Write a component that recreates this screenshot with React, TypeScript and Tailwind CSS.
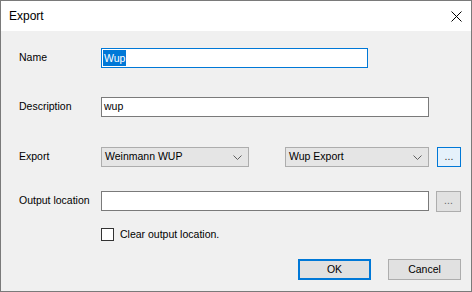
import React from 'react';

const font = { fontFamily: '"Liberation Sans", Arial, sans-serif' };

function Chevron() {
  return (
    <svg width="9" height="5" viewBox="0 0 9 5" className="shrink-0">
      <path d="M0.5 0.5 L4.5 4.5 L8.5 0.5" fill="none" stroke="#606060" strokeWidth="1" />
    </svg>
  );
}

function Combo({ text, width }: { text: string; width: string }) {
  return (
    <div className={`${width} h-[20px] flex items-center justify-between pl-[3px] pr-[6px] bg-[#e5e5e5] border border-[#adadad] text-black`}>
      <span>{text}</span>
      <Chevron />
    </div>
  );
}

function Label({ children }: { children: React.ReactNode }) {
  return <div className="w-[82px] shrink-0 text-black">{children}</div>;
}

export default function App() {
  return (
    <div className="w-[472px] h-[292px] flex flex-col border border-[#7a7a7a] bg-white text-[10.5px]" style={font}>
      {/* title bar */}
      <div className="h-[30px] shrink-0 flex items-center justify-between pl-[8px] pr-[9px] bg-white">
        <span className="text-[12px] text-black">Export</span>
        <svg width="11" height="11" viewBox="0 0 11 11">
          <path d="M0.5 0.5 L10.5 10.5 M10.5 0.5 L0.5 10.5" stroke="#000" strokeWidth="1" />
        </svg>
      </div>

      {/* client */}
      <div className="flex-1 flex flex-col bg-[#f0f0f0] pl-[18px] pr-[10px]">
        <div className="mt-[17px] h-[20px] flex items-center">
          <Label>Name</Label>
          <div className="w-[267px] h-[20px] flex items-center bg-white border border-[#0078d7] pl-[1px]">
            <span className="bg-[#0078d7] text-white px-[1px] leading-[16px]">Wup</span>
          </div>
        </div>

        <div className="mt-[29px] h-[20px] flex items-center">
          <Label>Description</Label>
          <div className="w-[328px] h-[20px] flex items-center bg-white border border-[#7a7a7a] pl-[2px] text-black">wup</div>
        </div>

        <div className="mt-[30px] h-[20px] flex items-center">
          <Label>Export</Label>
          <Combo text="Weinmann WUP" width="w-[148px]" />
          <div className="ml-[36px]">
            <Combo text="Wup Export" width="w-[144px]" />
          </div>
          <div className="ml-[8px] w-[24px] h-[20px] flex items-center justify-center bg-[#e5f1fb] border border-[#0078d7] text-[#333] leading-none pb-[2px]">...</div>
        </div>

        <div className="mt-[24px] h-[20px] flex items-center">
          <Label>Output location</Label>
          <div className="w-[328px] h-[20px] bg-white border border-[#7a7a7a]" />
          <div className="ml-[7px] w-[25px] h-[21px] flex items-center justify-center bg-[#e1e1e1] border border-[#adadad] text-[#666] leading-none pb-[2px]">...</div>
        </div>

        <div className="mt-[17px] h-[13px] flex items-center pl-[82px]">
          <div className="w-[13px] h-[13px] bg-white border border-[#333]" />
          <span className="ml-[6px] text-black">Clear output location.</span>
        </div>

        <div className="mt-[18px] flex justify-end">
          <div className="w-[73px] h-[21px] flex items-center justify-center bg-[#e1e1e1] border-2 border-[#0078d7] text-black">OK</div>
          <div className="ml-[17px] w-[73px] h-[21px] flex items-center justify-center bg-[#e1e1e1] border border-[#adadad] text-black">Cancel</div>
        </div>
      </div>
    </div>
  );
}
